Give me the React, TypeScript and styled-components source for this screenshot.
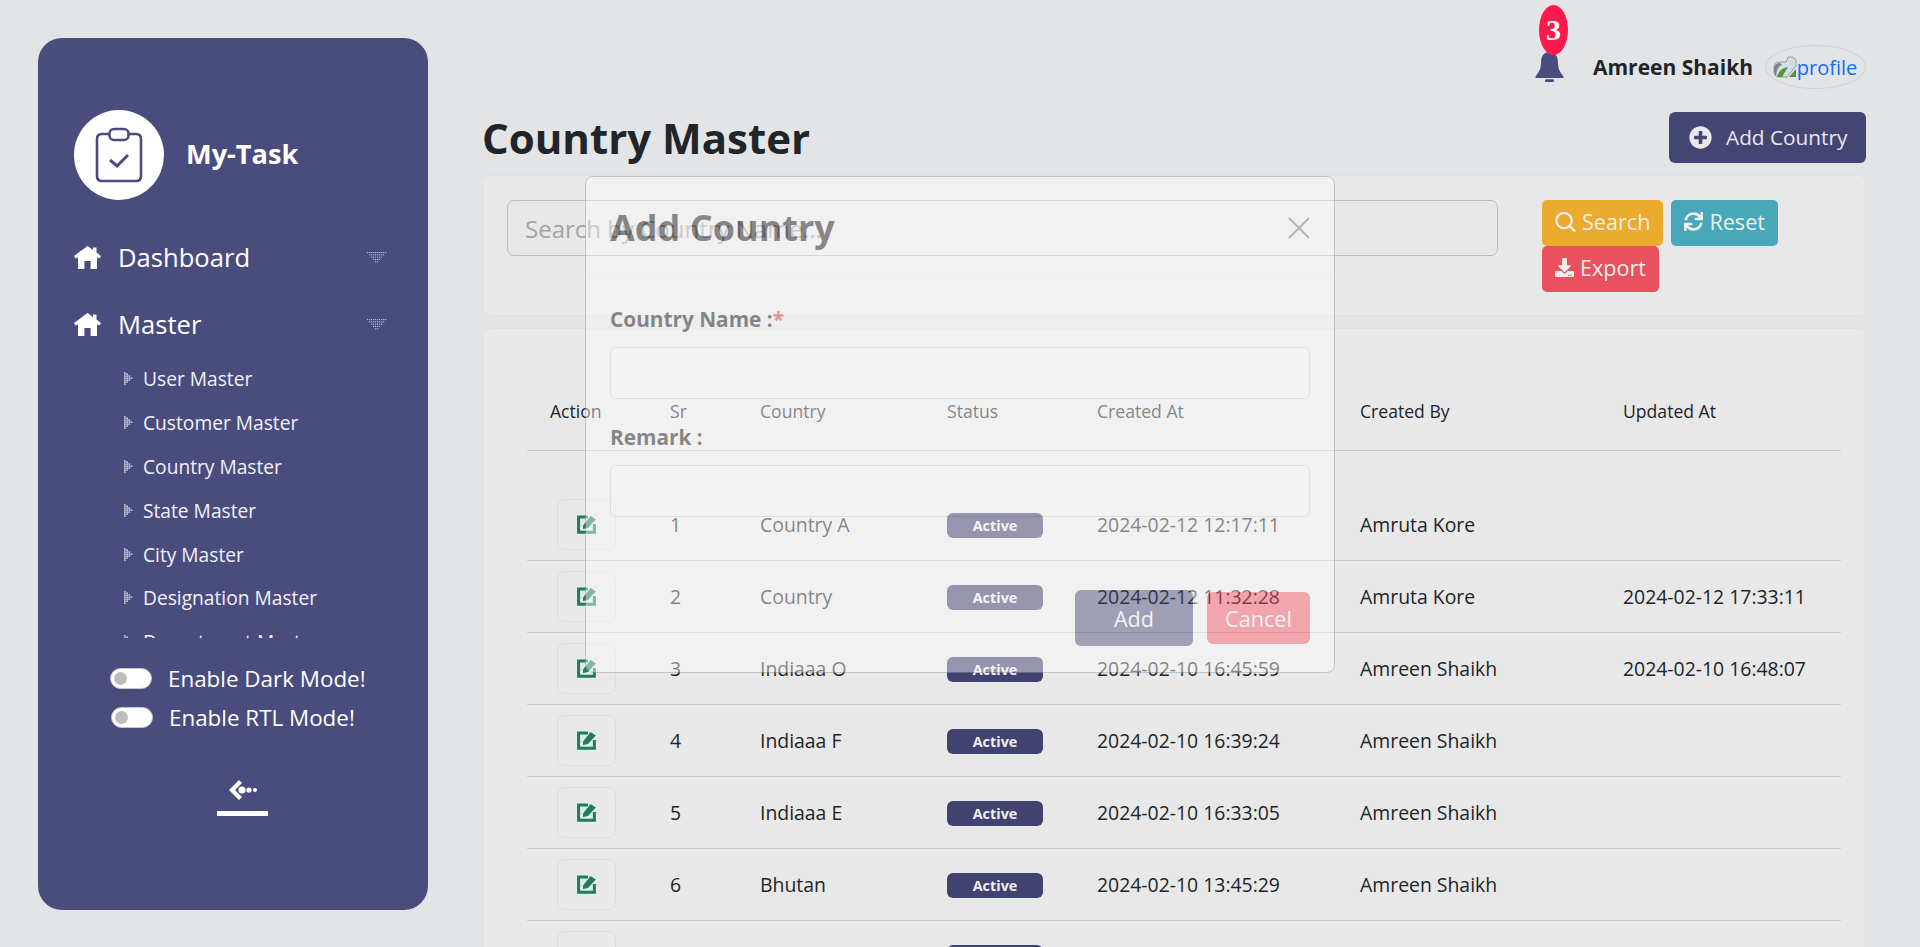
import React from "react";
import styled, { createGlobalStyle } from "styled-components";
import { FaDownload, FaPlusCircle, FaSync } from "react-icons/fa";

const GlobalStyle = createGlobalStyle`
  html, body {
    margin: 0;
    padding: 0;
    height: 947px;
    overflow: hidden;
    background: #e3e4e6;
    font-family: "Open Sans", "Liberation Sans", sans-serif;
    color: #212529;
  }
  * { box-sizing: border-box; }
`;

const masters = [
  "User Master",
  "Customer Master",
  "Country Master",
  "State Master",
  "City Master",
  "Designation Master",
  "Department Master",
];

const rows = [
  { sr: "1", country: "Country A", created: "2024-02-12 12:17:11", by: "Amruta Kore", updated: "" },
  { sr: "2", country: "Country", created: "2024-02-12 11:32:28", by: "Amruta Kore", updated: "2024-02-12 17:33:11" },
  { sr: "3", country: "Indiaaa O", created: "2024-02-10 16:45:59", by: "Amreen Shaikh", updated: "2024-02-10 16:48:07" },
  { sr: "4", country: "Indiaaa F", created: "2024-02-10 16:39:24", by: "Amreen Shaikh", updated: "" },
  { sr: "5", country: "Indiaaa E", created: "2024-02-10 16:33:05", by: "Amreen Shaikh", updated: "" },
  { sr: "6", country: "Bhutan", created: "2024-02-10 13:45:29", by: "Amreen Shaikh", updated: "" },
];

const HomeIcon = () => (
  <svg width="27" height="23" viewBox="0 0 27 23" fill="#fff">
    <path d="M13.5 0 L19 4 V1.5 H22.5 V6.6 L27 10 L25.4 12.6 L23 11.2 V23 H16.6 V15 H10.4 V23 H4 V11.2 L1.6 12.6 L0 10 Z" />
  </svg>
);

const DottedDown = () => (
  <svg width="20" height="12" viewBox="0 0 20 12" fill="#b4b5cc">
    {[0, 1, 2, 3, 4].map((r) =>
      Array.from({ length: 10 - r * 2 }).map((_, i) => (
        <rect key={`${r}-${i}`} x={r * 2 + i * 2} y={r * 2.3} width="1.2" height="1.1" />
      ))
    )}
  </svg>
);

const DottedRight = () => (
  <svg width="9" height="13" viewBox="0 0 9 13" fill="#e4e4ef">
    {[0, 1, 2, 3].map((c) =>
      Array.from({ length: 7 - c * 2 }).map((_, i) => (
        <rect key={`${c}-${i}`} x={c * 2.2} y={c * 2 + i * 2 - 0.5} width="1.8" height="1.2" />
      ))
    )}
  </svg>
);

const EditIcon = () => (
  <svg width="19" height="19" viewBox="0 0 19 19">
    <path d="M11 2 H1.6 V17.2 H17.4 V9" fill="none" stroke="#1a7f5a" strokeWidth="3" />
    <path d="M6 10.5 L13.6 1 L18.8 4.6 L11 13 L6 14 Z" fill="#1a7f5a" />
  </svg>
);

const CollapseIcon = () => (
  <svg width="32" height="22" viewBox="0 0 32 22" fill="#fff">
    <path d="M12 1 L15 4 L8 11 L15 18 L12 21 L2 11 Z" />
    <circle cx="15" cy="11" r="3.6" />
    <circle cx="22" cy="11" r="2.6" />
    <circle cx="28" cy="11" r="2" />
  </svg>
);

const BellIcon = () => (
  <svg width="29" height="30" viewBox="0 0 29 30" fill="#4a4c7e">
    <path d="M14.5 0 C8 0 6 5 6 11 C6 17 4 20 0.5 24.5 V26 H28.5 V24.5 C25 20 23 17 23 11 C23 5 21 0 14.5 0 Z" />
    <rect x="10" y="27.3" width="9" height="2.7" rx="1.2" />
  </svg>
);

const BrokenImage = () => (
  <BrokenSvg width="24" height="22" viewBox="0 0 24 22">
    <path d="M15 1 H20 L23 4 V10 L14 21 H6 Q1 21 1 15 V12 Q1 6 6 6 H13 Z" fill="#d3dbe6" stroke="#9a9c9e" strokeWidth="1" />
    <path d="M1 14 Q1 7 7 7 L9 9 Q4 10 3 20 Q1 19 1 14 Z" fill="#7d8185" />
    <path d="M4 20 Q7 12 15 11 L9 21 H5 Z" fill="#4f9a37" />
    <path d="M16 21 L23 13 V21 Z" fill="#4f9a37" />
  </BrokenSvg>
);

const SearchGlyph = () => (
  <svg width="21" height="22" viewBox="0 0 22 22" fill="none" stroke="#efeee9" strokeWidth="2.4">
    <circle cx="9.5" cy="9.5" r="8" />
    <path d="M15.5 15.5 L21 21" />
  </svg>
);

export default function App() {
  return (
    <Page>
      <GlobalStyle />
      <Sidebar>
        <Brand>
          <LogoCircle>
            <svg width="50" height="56" viewBox="0 0 50 56" fill="none" stroke="#4a4c7e" strokeWidth="2.6">
              <path d="M15 7 H8 Q3 7 3 12 V49 Q3 54 8 54 H42 Q47 54 47 49 V12 Q47 7 42 7 H35" />
              <rect x="15.5" y="2" width="19" height="11" rx="4.5" />
              <path d="M16 33 L23 39 L34 28" strokeWidth="3" />
            </svg>
          </LogoCircle>
          <BrandName>My-Task</BrandName>
        </Brand>
        <NavItem>
          <HomeIcon />
          <NavLabel>Dashboard</NavLabel>
          <DottedDown />
        </NavItem>
        <NavItem>
          <HomeIcon />
          <NavLabel>Master</NavLabel>
          <DottedDown />
        </NavItem>
        <SubMenu>
          {masters.map((m) => (
            <SubItem key={m}>
              <DottedRight />
              {m}
            </SubItem>
          ))}
        </SubMenu>
        <ToggleGroup>
          <ToggleRow>
            <Toggle />
            Enable Dark Mode!
          </ToggleRow>
          <ToggleRow $shift>
            <Toggle />
            Enable RTL Mode!
          </ToggleRow>
        </ToggleGroup>
        <CollapseButton>
          <CollapseIcon />
        </CollapseButton>
      </Sidebar>

      <Main>
        <TopBar>
          <BellWrap>
            <BellIcon />
            <BellBadge>3</BellBadge>
          </BellWrap>
          <UserName>Amreen Shaikh</UserName>
          <Avatar>
            <BrokenImage />
            profile
          </Avatar>
        </TopBar>

        <TitleRow>
          <Title>Country Master</Title>
          <AddButton>
            <FaPlusCircle size={23} />
            Add Country
          </AddButton>
        </TitleRow>

        <SearchCard>
          <SearchInput placeholder="Search by Country Name..." />
          <SearchActions>
            <ActionButton $bg="#eaab2f">
              <SearchGlyph />
              Search
            </ActionButton>
            <ActionButton $bg="#48a8ba">
              <FaSync size={19} />
              Reset
            </ActionButton>
            <ActionButton $bg="#e95160">
              <FaDownload size={19} />
              Export
            </ActionButton>
          </SearchActions>
        </SearchCard>

        <TableCard>
          <Table>
            <colgroup>
              <col width="135" />
              <col width="90" />
              <col width="187" />
              <col width="150" />
              <col width="263" />
              <col width="263" />
              <col width="226" />
            </colgroup>
            <thead>
              <tr>
                <ActionHead>Action</ActionHead>
                <Head>Sr</Head>
                <Head>Country</Head>
                <Head>Status</Head>
                <Head>Created At</Head>
                <Head>Created By</Head>
                <Head>Updated At</Head>
              </tr>
            </thead>
            <tbody>
              {rows.map((r) => (
                <tr key={r.sr}>
                  <ActionCell>
                    <EditButton>
                      <EditIcon />
                    </EditButton>
                  </ActionCell>
                  <Cell>{r.sr}</Cell>
                  <Cell>{r.country}</Cell>
                  <Cell>
                    <StatusBadge>Active</StatusBadge>
                  </Cell>
                  <Cell>{r.created}</Cell>
                  <Cell>{r.by}</Cell>
                  <Cell>{r.updated}</Cell>
                </tr>
              ))}
              <tr>
                <ActionCell>
                  <EditButton>
                    <EditIcon />
                  </EditButton>
                </ActionCell>
                <Cell />
                <Cell />
                <Cell>
                  <StatusBadge>Active</StatusBadge>
                </Cell>
                <Cell />
                <Cell />
                <Cell />
              </tr>
            </tbody>
          </Table>
        </TableCard>
      </Main>

      <Modal>
        <ModalHeader>
          <ModalTitle>Add Country</ModalTitle>
          <CloseX width="22" height="22" viewBox="0 0 22 22" stroke="#777" strokeWidth="2" fill="none">
            <path d="M1 1 L21 21 M21 1 L1 21" />
          </CloseX>
        </ModalHeader>
        <ModalBody>
          <FieldLabel>
            Country Name :<Required>*</Required>
          </FieldLabel>
          <FieldInput />
          <FieldLabel>Remark :</FieldLabel>
          <FieldInput />
        </ModalBody>
        <ModalFooter>
          <ModalAdd>Add</ModalAdd>
          <ModalCancel>Cancel</ModalCancel>
        </ModalFooter>
      </Modal>
    </Page>
  );
}

const Page = styled.div`
  position: relative;
  display: flex;
  align-items: flex-start;
  width: 1920px;
  height: 947px;
  overflow: hidden;
`;

const Sidebar = styled.aside`
  flex: none;
  width: 390px;
  height: 872px;
  margin: 38px 0 0 38px;
  padding: 72px 36px 0;
  border-radius: 24px;
  background: #4a4c7e;
  color: #fff;
`;

const Brand = styled.div`
  display: flex;
  align-items: center;
  gap: 22px;
  margin-bottom: 24px;
`;

const LogoCircle = styled.div`
  display: flex;
  align-items: center;
  justify-content: center;
  width: 90px;
  height: 90px;
  border-radius: 50%;
  background: #fff;
`;

const BrandName = styled.div`
  font-size: 27.2px;
  font-weight: 700;
  margin-top: -3px;
`;

const NavItem = styled.div`
  display: flex;
  align-items: center;
  height: 67px;
  padding-right: 5px;
`;

const NavLabel = styled.span`
  flex: 1;
  margin-left: 17px;
  font-size: 25.6px;
`;

const SubMenu = styled.ul`
  height: 281px;
  margin: -1px 0 0;
  padding: 0 0 0 50px;
  list-style: none;
  overflow: hidden;
`;

const SubItem = styled.li`
  display: flex;
  align-items: center;
  gap: 10px;
  height: 43.8px;
  font-size: 19.2px;
  color: #f1f1f6;
`;

const ToggleGroup = styled.div`
  margin-top: 21px;
`;

const ToggleRow = styled.div<{ $shift?: boolean }>`
  display: flex;
  align-items: center;
  gap: 16px;
  height: 39px;
  margin-left: ${(p) => (p.$shift ? "37px" : "36px")};
  font-size: 22.4px;
`;

const Toggle = styled.span`
  position: relative;
  flex: none;
  width: 42px;
  height: 21px;
  border-radius: 11px;
  background: #fff;
  border: 1px solid #c6c6c6;

  &::after {
    content: "";
    position: absolute;
    top: 3px;
    left: 3px;
    width: 13px;
    height: 13px;
    border-radius: 50%;
    background: #bdbdbd;
  }
`;

const CollapseButton = styled.div`
  display: flex;
  justify-content: center;
  width: 51px;
  margin: 42px 0 0 143px;
  padding-bottom: 10px;
  border-bottom: 5px solid #fff;
`;

const Main = styled.main`
  flex: none;
  width: 1384px;
  margin-left: 54px;
`;

const TopBar = styled.div`
  display: flex;
  align-items: center;
  justify-content: flex-end;
  height: 94px;
  padding-top: 40px;
`;

const BellWrap = styled.div`
  position: relative;
  display: flex;
  margin-right: 29px;
`;

const BellBadge = styled.span`
  position: absolute;
  left: 4px;
  top: -47px;
  display: flex;
  align-items: center;
  justify-content: center;
  width: 29px;
  height: 50px;
  border-radius: 50%;
  background: #ff1a4b;
  color: #fff;
  font-family: "Liberation Serif", serif;
  font-size: 30px;
  font-weight: 700;
`;

const UserName = styled.span`
  font-size: 21px;
  font-weight: 700;
  margin-right: 12px;
`;

const Avatar = styled.span`
  display: flex;
  align-items: center;
  justify-content: center;
  width: 101px;
  height: 44px;
  border: 1px solid #d0d1d3;
  border-radius: 50%;
  color: #0d6efd;
  font-size: 20px;
`;

const BrokenSvg = styled.svg`
  flex: none;
  margin-left: -1px;
`;

const TitleRow = styled.div`
  display: flex;
  align-items: center;
  justify-content: space-between;
  height: 81px;
  padding-top: 5px;
`;

const Title = styled.h1`
  margin: 0;
  font-size: 42px;
  font-weight: 700;
`;

const AddButton = styled.button`
  display: flex;
  align-items: center;
  gap: 14px;
  height: 51px;
  width: 197px;
  padding: 0 0 0 20px;
  border: 0;
  border-radius: 6px;
  background: #454574;
  color: #e8e8ee;
  font-family: inherit;
  font-size: 20.8px;
`;

const Panel = styled.section`
  background: #e8e8e8;
  border: 1px solid #dfe0e2;
  border-radius: 7px;
`;

const SearchCard = styled(Panel)`
  display: flex;
  height: 141px;
  padding: 24px;
`;

const SearchInput = styled.input`
  flex: none;
  width: 991px;
  height: 56px;
  padding: 0 17px;
  border: 1px solid #b9bcc4;
  border-radius: 7px;
  background: transparent;
  font-family: inherit;
  font-size: 24px;

  &::placeholder {
    color: #a2a3a5;
  }
`;

const SearchActions = styled.div`
  display: flex;
  flex-wrap: wrap;
  align-content: flex-start;
  gap: 0 8px;
  width: 300px;
  margin-left: 44px;
`;

const ActionButton = styled.button<{ $bg: string }>`
  display: flex;
  align-items: center;
  gap: 6px;
  height: 46px;
  padding: 0 13px 3px;
  border: 0;
  border-radius: 5px;
  background: ${(p) => p.$bg};
  color: #efeee9;
  font-family: inherit;
  font-size: 21.6px;
  font-weight: 500;
`;

const TableCard = styled(Panel)`
  margin-top: 12px;
  padding: 45px 24px 0 44px;
`;

const Table = styled.table`
  width: 1314px;
  table-layout: fixed;
  border-collapse: collapse;

  tbody::before {
    content: "";
    display: block;
    height: 38px;
  }
`;

const Head = styled.th`
  height: 76px;
  padding: 0 8px 2px;
  text-align: left;
  font-size: 17.6px;
  font-weight: 400;
  border-bottom: 1px solid #c9cacc;
`;

const ActionHead = styled(Head)`
  padding-left: 23px;
`;

const Cell = styled.td`
  height: 72px;
  padding: 0 8px;
  font-size: 19.4px;
  border-bottom: 1px solid #cbcccd;
`;

const ActionCell = styled(Cell)`
  padding-left: 30px;
`;

const EditButton = styled.span`
  display: flex;
  align-items: center;
  justify-content: center;
  width: 59px;
  height: 51px;
  border: 1px solid #dcdddd;
  border-radius: 7px;
`;

const StatusBadge = styled.span`
  display: flex;
  align-items: center;
  justify-content: center;
  width: 96px;
  height: 25px;
  margin-top: 2px;
  border-radius: 6px;
  background: #41426f;
  color: #eeeef2;
  font-size: 14.4px;
  font-weight: 700;
`;

const Modal = styled.div`
  position: absolute;
  left: 585px;
  top: 176px;
  width: 750px;
  height: 497px;
  background: #fcfcfc;
  border: 1px solid #999;
  border-radius: 8px;
  color: #111;
  opacity: 0.45;
`;

const ModalHeader = styled.div`
  display: flex;
  align-items: center;
  justify-content: space-between;
  height: 102px;
  padding: 0 24px;
  border-bottom: 1px solid #f3f4f4;
`;

const ModalTitle = styled.h2`
  margin: 0;
  font-size: 36px;
  font-weight: 700;
`;

const CloseX = styled.svg`
  flex: none;
`;

const ModalBody = styled.div`
  height: 287px;
  padding: 24px 24px 0;
`;

const FieldLabel = styled.label`
  display: block;
  height: 44px;
  padding-top: 2px;
  font-size: 20.8px;
  font-weight: 700;
`;

const Required = styled.span`
  color: #e8283c;
`;

const FieldInput = styled.input`
  display: block;
  width: 700px;
  height: 52px;
  margin-bottom: 22px;
  border: 1px solid #d6d7d8;
  border-radius: 6px;
  background: #fff;
`;

const ModalFooter = styled.div`
  display: flex;
  align-items: flex-start;
  justify-content: flex-end;
  gap: 14px;
  padding: 23px 24px 0;
  border-top: 1px solid #f6f7f7;
`;

const ModalAdd = styled.button`
  width: 118px;
  height: 56px;
  border: 0;
  border-radius: 6px;
  background: #484a78;
  color: #fff;
  font-family: inherit;
  font-size: 21.6px;
`;

const ModalCancel = styled.button`
  width: 103px;
  height: 52px;
  margin-top: 2px;
  border: 0;
  border-radius: 6px;
  background: #fe5567;
  color: #fff;
  font-family: inherit;
  font-size: 21.6px;
`;
